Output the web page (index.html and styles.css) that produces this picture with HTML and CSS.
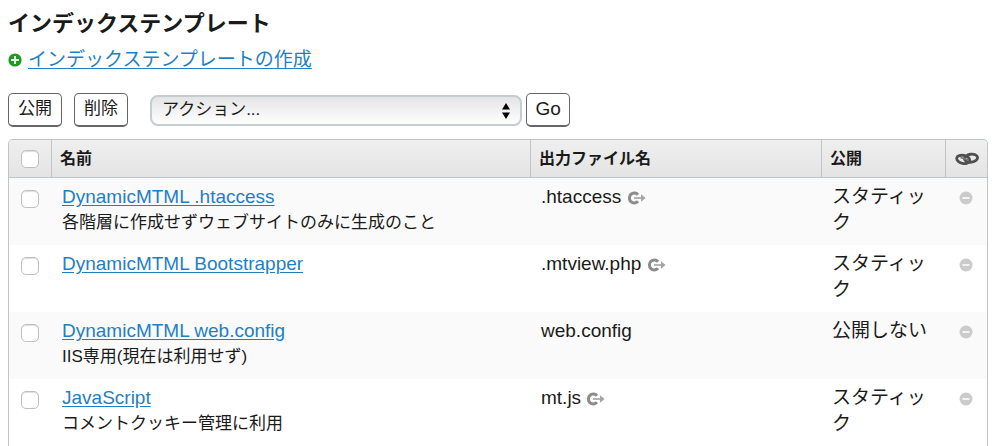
FILE: index.html
```html
<!DOCTYPE html>
<html lang="ja">
<head>
<meta charset="utf-8">
<title>インデックステンプレート</title>
<link rel="stylesheet" href="styles.css">
</head>
<body>

<!-- shared icons -->
<svg class="defs" width="0" height="0" aria-hidden="true">
	<symbol id="icon-view" viewBox="0 0 20 14">
		<path d="M11 3.8A4.9 4.9 0 1 0 11 10.2" fill="none" stroke="#8c8c8c" stroke-width="3"/>
		<path d="M7 7h8" stroke="#b4b4b4" stroke-width="2"/>
		<path d="M14 3.2L18.6 7L14 10.8z" fill="#a4a4a4"/>
	</symbol>
	<symbol id="icon-minus" viewBox="0 0 14 14">
		<circle cx="7" cy="7" r="6.5" fill="#cbcbcb"/>
		<path d="M3.5 7h7" stroke="#f4f4f4" stroke-width="2"/>
	</symbol>
</svg>

<h1>インデックステンプレート</h1>
<p class="create">
	<svg width="14" height="14" viewBox="0 0 14 14" aria-hidden="true">
		<circle cx="7" cy="7" r="6.6" fill="#1f9a22"/>
		<path d="M7 3v8M3 7h8" stroke="#e6f6e6" stroke-width="2"/>
	</svg>
	<a href="#">インデックステンプレートの作成</a>
</p>

<form id="listing">
	<div class="actions">
		<button type="button" class="button">公開</button>
		<button type="button" class="button">削除</button>
		<div class="plugin">
			<select class="action" aria-label="アクション">
				<option>アクション...</option>
			</select>
			<svg class="arrows" width="8" height="16" viewBox="0 0 8 16" aria-hidden="true">
				<path d="M4 0L8 6.6H0zM0 9.4H8L4 16z" fill="#000"/>
			</svg>
		</div>
		<button type="button" class="button go">Go</button>
	</div>

	<div class="listing">
	<table>
		<thead>
			<tr>
				<th class="cb"><input type="checkbox" aria-label="すべて選択"></th>
				<th class="name">名前</th>
				<th class="file">出力ファイル名</th>
				<th class="status">公開</th>
				<th class="link">
					<svg width="24" height="14" viewBox="0 0 24 14" role="img" aria-label="リンク">
						<g fill="none" stroke-width="2.8">
							<ellipse cx="8.2" cy="7.4" rx="6.6" ry="4" stroke="#505050" transform="rotate(12 8.2 7.4)"/>
							<ellipse cx="16" cy="6.2" rx="6.6" ry="4" stroke="#505050" transform="rotate(-8 16 6.2)"/>
							<path d="M5.5 5.6L13.6 8" stroke="#777" stroke-width="1.6"/>
						</g>
					</svg>
				</th>
			</tr>
		</thead>
		<tbody>
			<tr>
				<td class="cb"><input type="checkbox" aria-label="DynamicMTML .htaccess"></td>
				<td><a href="#">DynamicMTML .htaccess</a><div class="desc">各階層に作成せずウェブサイトのみに生成のこと</div></td>
				<td>.htaccess <svg class="view" width="20" height="14"><use href="#icon-view"/></svg></td>
				<td>スタティック</td>
				<td class="link"><svg width="14" height="14"><use href="#icon-minus"/></svg></td>
			</tr>
			<tr>
				<td class="cb"><input type="checkbox" aria-label="DynamicMTML Bootstrapper"></td>
				<td><a href="#">DynamicMTML Bootstrapper</a></td>
				<td>.mtview.php <svg class="view" width="20" height="14"><use href="#icon-view"/></svg></td>
				<td>スタティック</td>
				<td class="link"><svg width="14" height="14"><use href="#icon-minus"/></svg></td>
			</tr>
			<tr>
				<td class="cb"><input type="checkbox" aria-label="DynamicMTML web.config"></td>
				<td><a href="#">DynamicMTML web.config</a><div class="desc">IIS専用(現在は利用せず)</div></td>
				<td>web.config</td>
				<td>公開しない</td>
				<td class="link"><svg width="14" height="14"><use href="#icon-minus"/></svg></td>
			</tr>
			<tr>
				<td class="cb"><input type="checkbox" aria-label="JavaScript"></td>
				<td><a href="#">JavaScript</a><div class="desc">コメントクッキー管理に利用</div></td>
				<td>mt.js <svg class="view" width="20" height="14"><use href="#icon-view"/></svg></td>
				<td>スタティック</td>
				<td class="link"><svg width="14" height="14"><use href="#icon-minus"/></svg></td>
			</tr>
		</tbody>
	</table>
	</div>
</form>

</body>
</html>
```
FILE: styles.css
```css
* {
	box-sizing: border-box;
}
body {
	margin: 0;
	padding: 8px 12px 0 8px;
	background: #fff;
	color: #1a1a1a;
	font-family: "Liberation Sans", "Noto Sans CJK JP", sans-serif;
	font-size: 19px;
	line-height: 26px;
}
.defs {
	position: absolute;
}
h1 {
	margin: 0;
	font-size: 22px;
	line-height: 32px;
}
a {
	color: #1f7fc4;
	text-underline-offset: 2px;
}
.create {
	display: flex;
	align-items: center;
	gap: 6px;
	margin: 7px 0 20px;
}

/* buttons above the list */
.actions {
	display: flex;
	align-items: center;
	gap: 12px;
	margin-bottom: 12px;
}
.button {
	height: 34px;
	padding: 0 9px 2px;
	border: 1px solid #666;
	border-bottom-width: 2px;
	border-radius: 5px;
	background: #fff;
	color: #1a1a1a;
	font: inherit;
	font-size: 17px;
}
.go {
	margin-left: -8px;
	padding: 0 8px 2px;
	font-size: 19px;
}
.plugin {
	position: relative;
	width: 38%;
	margin-left: 10px;
}
.action {
	display: block;
	width: 100%;
	height: 31px;
	padding: 0 30px 0 10px;
	border: 2px solid #c5cdd0;
	border-radius: 8px;
	background: linear-gradient(#e4e4e4, #fff);
	color: #1a1a1a;
	font: inherit;
	font-size: 17px;
	appearance: none;
}
.arrows {
	position: absolute;
	top: 8px;
	right: 12px;
	pointer-events: none;
}

/* template list */
.listing {
	border: 1px solid #bdc5ca;
	border-bottom: 0;
	border-radius: 5px 5px 0 0;
	overflow: hidden;
}
table {
	width: 100%;
	table-layout: fixed;
	border-collapse: separate;
	border-spacing: 0;
}
th {
	height: 38px;
	padding: 0 8px;
	border-bottom: 1px solid #bdc5ca;
	border-left: 1px solid #bdc5ca;
	background: linear-gradient(#efefef, #e4e4e4);
	font-size: 16px;
	text-align: left;
}
td {
	height: 67px;
	padding: 6px 11px 9px;
	vertical-align: top;
}
tbody tr:nth-child(odd) {
	background: #fafafa;
}
th.cb {
	width: 42px;
	border-left: 0;
}
th.file {
	width: 291px;
}
th.status {
	width: 124px;
}
th.link {
	width: 42px;
}
.cb, .link {
	padding-left: 0;
	padding-right: 0;
	text-align: center;
}
.cb input {
	display: block;
	width: 18px;
	height: 18px;
	margin: 0 auto;
	border: 1px solid #c0c0c0;
	border-radius: 5px;
	background: #fff;
	box-shadow: inset 0 1px 1px #ddd;
	appearance: none;
}
td.cb {
	padding-top: 12px;
}
.link svg {
	display: block;
	margin: 0 auto;
}
td.link {
	padding-top: 13px;
}
.desc {
	font-size: 17px;
}
.view {
	vertical-align: -2px;
}
```
